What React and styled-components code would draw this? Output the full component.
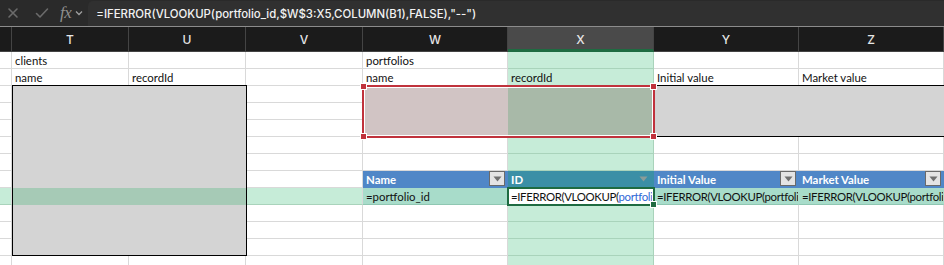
import React from 'react';
import styled, { createGlobalStyle } from 'styled-components';

const GlobalStyle = createGlobalStyle`
  html, body {
    margin: 0;
    padding: 0;
    background: #ffffff;
    overflow: hidden;
  }
`;

const COLS = [
  { key: 'rh', label: '', width: 12 },
  { key: 'T', label: 'T', width: 117 },
  { key: 'U', label: 'U', width: 117 },
  { key: 'V', label: 'V', width: 117 },
  { key: 'W', label: 'W', width: 145 },
  { key: 'X', label: 'X', width: 146 },
  { key: 'Y', label: 'Y', width: 145 },
  { key: 'Z', label: 'Z', width: 145 },
];

const ROW_H = 17;
const HEAD_H = 25;
const ROWS = 13;

const colors = {
  grid: '#d9d9d9',
  gray: '#d4d4d4',
  selCol: '#c6ecd8',
  selColLine: '#a9d3bb',
  selRow: '#c6ecd8',
  grayRow: '#a6cab6',
  pink: '#d1c4c4',
  pinkSel: '#a8b9a8',
  tableHead: '#5087c7',
  tableHeadSel: '#3b8fa6',
  tableRow: '#a8dcca',
  red: '#c0323c',
  active: '#1e6b41',
};

const App = () => (
  <>
    <GlobalStyle />
    <Window>
      <FormulaBar>
        <BarIcon>
          <svg width="12" height="12" viewBox="0 0 12 12">
            <path d="M2 2 L10 10 M10 2 L2 10" stroke="#6b6b6b" strokeWidth="1.6" strokeLinecap="round" />
          </svg>
        </BarIcon>
        <BarIcon>
          <svg width="14" height="12" viewBox="0 0 14 12">
            <path d="M1.5 6.5 L5 10 L12.5 2" stroke="#6b6b6b" strokeWidth="1.6" fill="none" strokeLinecap="round" strokeLinejoin="round" />
          </svg>
        </BarIcon>
        <Fx>fx</Fx>
        <Chevron>
          <svg width="8" height="6" viewBox="0 0 8 6">
            <path d="M1 1.5 L4 4.5 L7 1.5" stroke="#a0a0a0" strokeWidth="1.3" fill="none" />
          </svg>
        </Chevron>
        <FormulaInput>=IFERROR(VLOOKUP(portfolio_id,$W$3:X5,COLUMN(B1),FALSE),"--")</FormulaInput>
      </FormulaBar>
      <Sheet>
        <HeaderRow>
          {COLS.map((c) => (
            <ColHead key={c.key} $w={c.width} $sel={c.key === 'X'}>
              {c.label}
            </ColHead>
          ))}
        </HeaderRow>
        {Array.from({ length: ROWS }, (_, i) => (
          <SheetRow key={i} row={i + 1} />
        ))}

        <RangeBox style={{ left: 12, top: HEAD_H + 2 * ROW_H, width: 235, height: 10 * ROW_H + 1 }} />
        <RangeLines style={{ left: 654, top: HEAD_H + 2 * ROW_H, width: 290, height: 3 * ROW_H + 1 }} />
        <Selection style={{ left: 362, top: HEAD_H + 2 * ROW_H - 1, width: 293, height: 3 * ROW_H + 2 }}>
          <Handle $x="left" $y="top" />
          <Handle $x="right" $y="top" />
          <Handle $x="left" $y="bottom" />
          <Handle $x="right" $y="bottom" />
        </Selection>
        <ActiveCell style={{ left: 507, top: HEAD_H + 8 * ROW_H - 1, width: 148, height: ROW_H + 2 }}>
          <ActiveText>
            =IFERROR(VLOOKUP(<Ref>portfoli</Ref>
          </ActiveText>
          <FillHandle />
        </ActiveCell>
      </Sheet>
    </Window>
  </>
);

const cellFor = (row, key) => {
  const inGray = (key === 'T' || key === 'U') && row >= 3 && row <= 12;
  const cell = { bg: '#ffffff', right: colors.grid, bottom: colors.grid, text: '', head: false };

  if (key === 'X') {
    cell.bg = colors.selCol;
    cell.right = colors.selColLine;
    cell.bottom = colors.selColLine;
  }
  if (row === 9) {
    cell.bg = colors.selRow;
    cell.bottom = colors.selColLine;
  }
  if (inGray) {
    cell.bg = row === 9 ? colors.grayRow : colors.gray;
    cell.right = cell.bg;
    cell.bottom = cell.bg;
  }
  if (row >= 3 && row <= 5) {
    if (key === 'W') { cell.bg = colors.pink; cell.right = colors.pink; cell.bottom = colors.pink; }
    if (key === 'X') { cell.bg = colors.pinkSel; cell.right = colors.pinkSel; cell.bottom = colors.pinkSel; }
    if (key === 'Y' || key === 'Z') { cell.bg = colors.gray; cell.right = colors.gray; cell.bottom = colors.gray; }
  }
  if (row === 8 && ['W', 'X', 'Y', 'Z'].includes(key)) {
    cell.head = true;
    cell.bg = key === 'X' ? colors.tableHeadSel : colors.tableHead;
    cell.right = cell.bg;
    cell.bottom = cell.bg;
  }
  if (row === 9 && ['W', 'Y', 'Z'].includes(key)) {
    cell.bg = colors.tableRow;
    cell.right = colors.tableRow;
    cell.bottom = '#8fc7b2';
  }

  const texts = {
    1: { T: 'clients', W: 'portfolios' },
    2: { T: 'name', U: 'recordId', W: 'name', X: 'recordId', Y: 'Initial value', Z: 'Market value' },
    8: { W: 'Name', X: 'ID', Y: 'Initial Value', Z: 'Market Value' },
    9: { W: '=portfolio_id', Y: '=IFERROR(VLOOKUP(portfoli', Z: '=IFERROR(VLOOKUP(portfoli' },
  };
  cell.text = (texts[row] && texts[row][key]) || '';
  return cell;
};

const SheetRow = ({ row }) => (
  <RowLine>
    {COLS.map((c) => {
      const cell = cellFor(row, c.key);
      return (
        <Cell
          key={c.key}
          $w={c.width}
          $bg={cell.bg}
          $right={cell.right}
          $bottom={cell.bottom}
          $head={cell.head}
          $formula={cell.text.startsWith('=IF')}
        >
          {cell.text}
          {cell.head && (
            <FilterButton $sel={c.key === 'X'}>
              <svg width="9" height="6" viewBox="0 0 9 6">
                <path d="M0.5 0.5 L8.5 0.5 L4.5 5.5 Z" fill={c.key === 'X' ? '#8a9c98' : '#707070'} />
              </svg>
            </FilterButton>
          )}
        </Cell>
      );
    })}
  </RowLine>
);

const Window = styled.div`
  width: 944px;
  height: 265px;
  overflow: hidden;
  display: flex;
  flex-direction: column;
  font-family: Lato, 'Noto Sans', sans-serif;
`;

const FormulaBar = styled.div`
  height: 27px;
  flex: none;
  background: #2a2a2a;
  border-bottom: 1px solid #8c8c8c;
  display: flex;
  align-items: center;
  padding-left: 7px;
  box-sizing: border-box;
`;

const BarIcon = styled.div`
  width: 28px;
  height: 26px;
  display: flex;
  align-items: center;
  justify-content: flex-start;
`;

const Fx = styled.span`
  font-family: 'Liberation Serif', 'DejaVu Serif', serif;
  font-style: italic;
  font-size: 17px;
  color: #8f8f8f;
  margin-left: -3px;
  letter-spacing: -0.5px;
`;

const Chevron = styled.div`
  margin-left: 4px;
  width: 9px;
  display: flex;
  align-items: center;
`;

const FormulaInput = styled.div`
  margin-left: 4px;
  align-self: stretch;
  margin-top: 1px;
  flex: 1;
  background: #303030;
  border-radius: 5px 0 0 0;
  color: #f2f2f2;
  font-family: Inter, 'Liberation Sans', sans-serif;
  font-size: 11.4px;
  font-weight: 500;
  display: flex;
  align-items: center;
  padding-left: 8px;
  white-space: nowrap;
`;

const Sheet = styled.div`
  position: relative;
  flex: 1;
`;

const HeaderRow = styled.div`
  display: flex;
  height: ${HEAD_H}px;
  background: #1b1b1b;
`;

const ColHead = styled.div`
  width: ${(p) => p.$w}px;
  flex: none;
  box-sizing: border-box;
  border-right: 1px solid #444444;
  background: ${(p) => (p.$sel ? '#4a4a4a' : 'transparent')};
  border-bottom: ${(p) => (p.$sel ? '3px solid #1e6b41' : '1px solid #444')};
  color: #e6e6e6;
  font-family: Inter, 'Liberation Sans', sans-serif;
  font-size: 12px;
  font-weight: 500;
  display: flex;
  align-items: center;
  justify-content: center;
  padding-top: ${(p) => (p.$sel ? '2px' : '0')};
`;

const RowLine = styled.div`
  display: flex;
  height: ${ROW_H}px;
`;

const Cell = styled.div`
  width: ${(p) => p.$w}px;
  flex: none;
  position: relative;
  box-sizing: border-box;
  background: ${(p) => p.$bg};
  border-right: 1px solid ${(p) => p.$right};
  border-bottom: 1px solid ${(p) => p.$bottom};
  color: ${(p) => (p.$head ? '#ffffff' : '#111111')};
  font-weight: ${(p) => (p.$head ? 700 : 400)};
  font-size: 11.4px;
  letter-spacing: ${(p) => (p.$formula ? '-0.35px' : 'normal')};
  line-height: 14px;
  padding: 2px 0 0 3px;
  white-space: nowrap;
  overflow: hidden;
`;

const FilterButton = styled.div`
  position: absolute;
  right: 2px;
  top: 0;
  width: 16px;
  height: 15px;
  box-sizing: border-box;
  border: 1px solid ${(p) => (p.$sel ? '#3b8fa6' : '#6a6a6a')};
  background: ${(p) => (p.$sel ? '#3b8fa6' : '#e4e4e4')};
  display: flex;
  align-items: center;
  justify-content: center;
`;

const RangeBox = styled.div`
  position: absolute;
  box-sizing: border-box;
  border: 1px solid #000000;
  margin-top: -1px;
  pointer-events: none;
`;

const RangeLines = styled.div`
  position: absolute;
  box-sizing: border-box;
  border-top: 1px solid #000000;
  border-bottom: 1px solid #000000;
  margin-top: -1px;
`;

const Selection = styled.div`
  position: absolute;
  box-sizing: border-box;
  border: 2px solid ${colors.red};
  box-shadow: inset 0 0 0 1px #ffffff;
`;

const Handle = styled.div`
  position: absolute;
  width: 5px;
  height: 5px;
  background: ${colors.red};
  border: 1px solid #ffffff;
  ${(p) => (p.$x === 'left' ? 'left: -4px;' : 'right: -4px;')}
  ${(p) => (p.$y === 'top' ? 'top: -4px;' : 'bottom: -4px;')}
`;

const ActiveCell = styled.div`
  position: absolute;
  box-sizing: border-box;
  border: 2px solid ${colors.active};
  background: #ffffff;
  overflow: visible;
`;

const ActiveText = styled.div`
  font-size: 11.4px;
  letter-spacing: -0.35px;
  line-height: 14px;
  color: #111111;
  padding: 1px 0 0 2px;
  white-space: nowrap;
  overflow: hidden;
  width: 141px;
  height: 14px;
`;

const Ref = styled.span`
  color: #2f67d6;
`;

const FillHandle = styled.div`
  position: absolute;
  right: -4px;
  bottom: -4px;
  width: 5px;
  height: 5px;
  background: ${colors.active};
  border: 1px solid #ffffff;
`;

export default App;
